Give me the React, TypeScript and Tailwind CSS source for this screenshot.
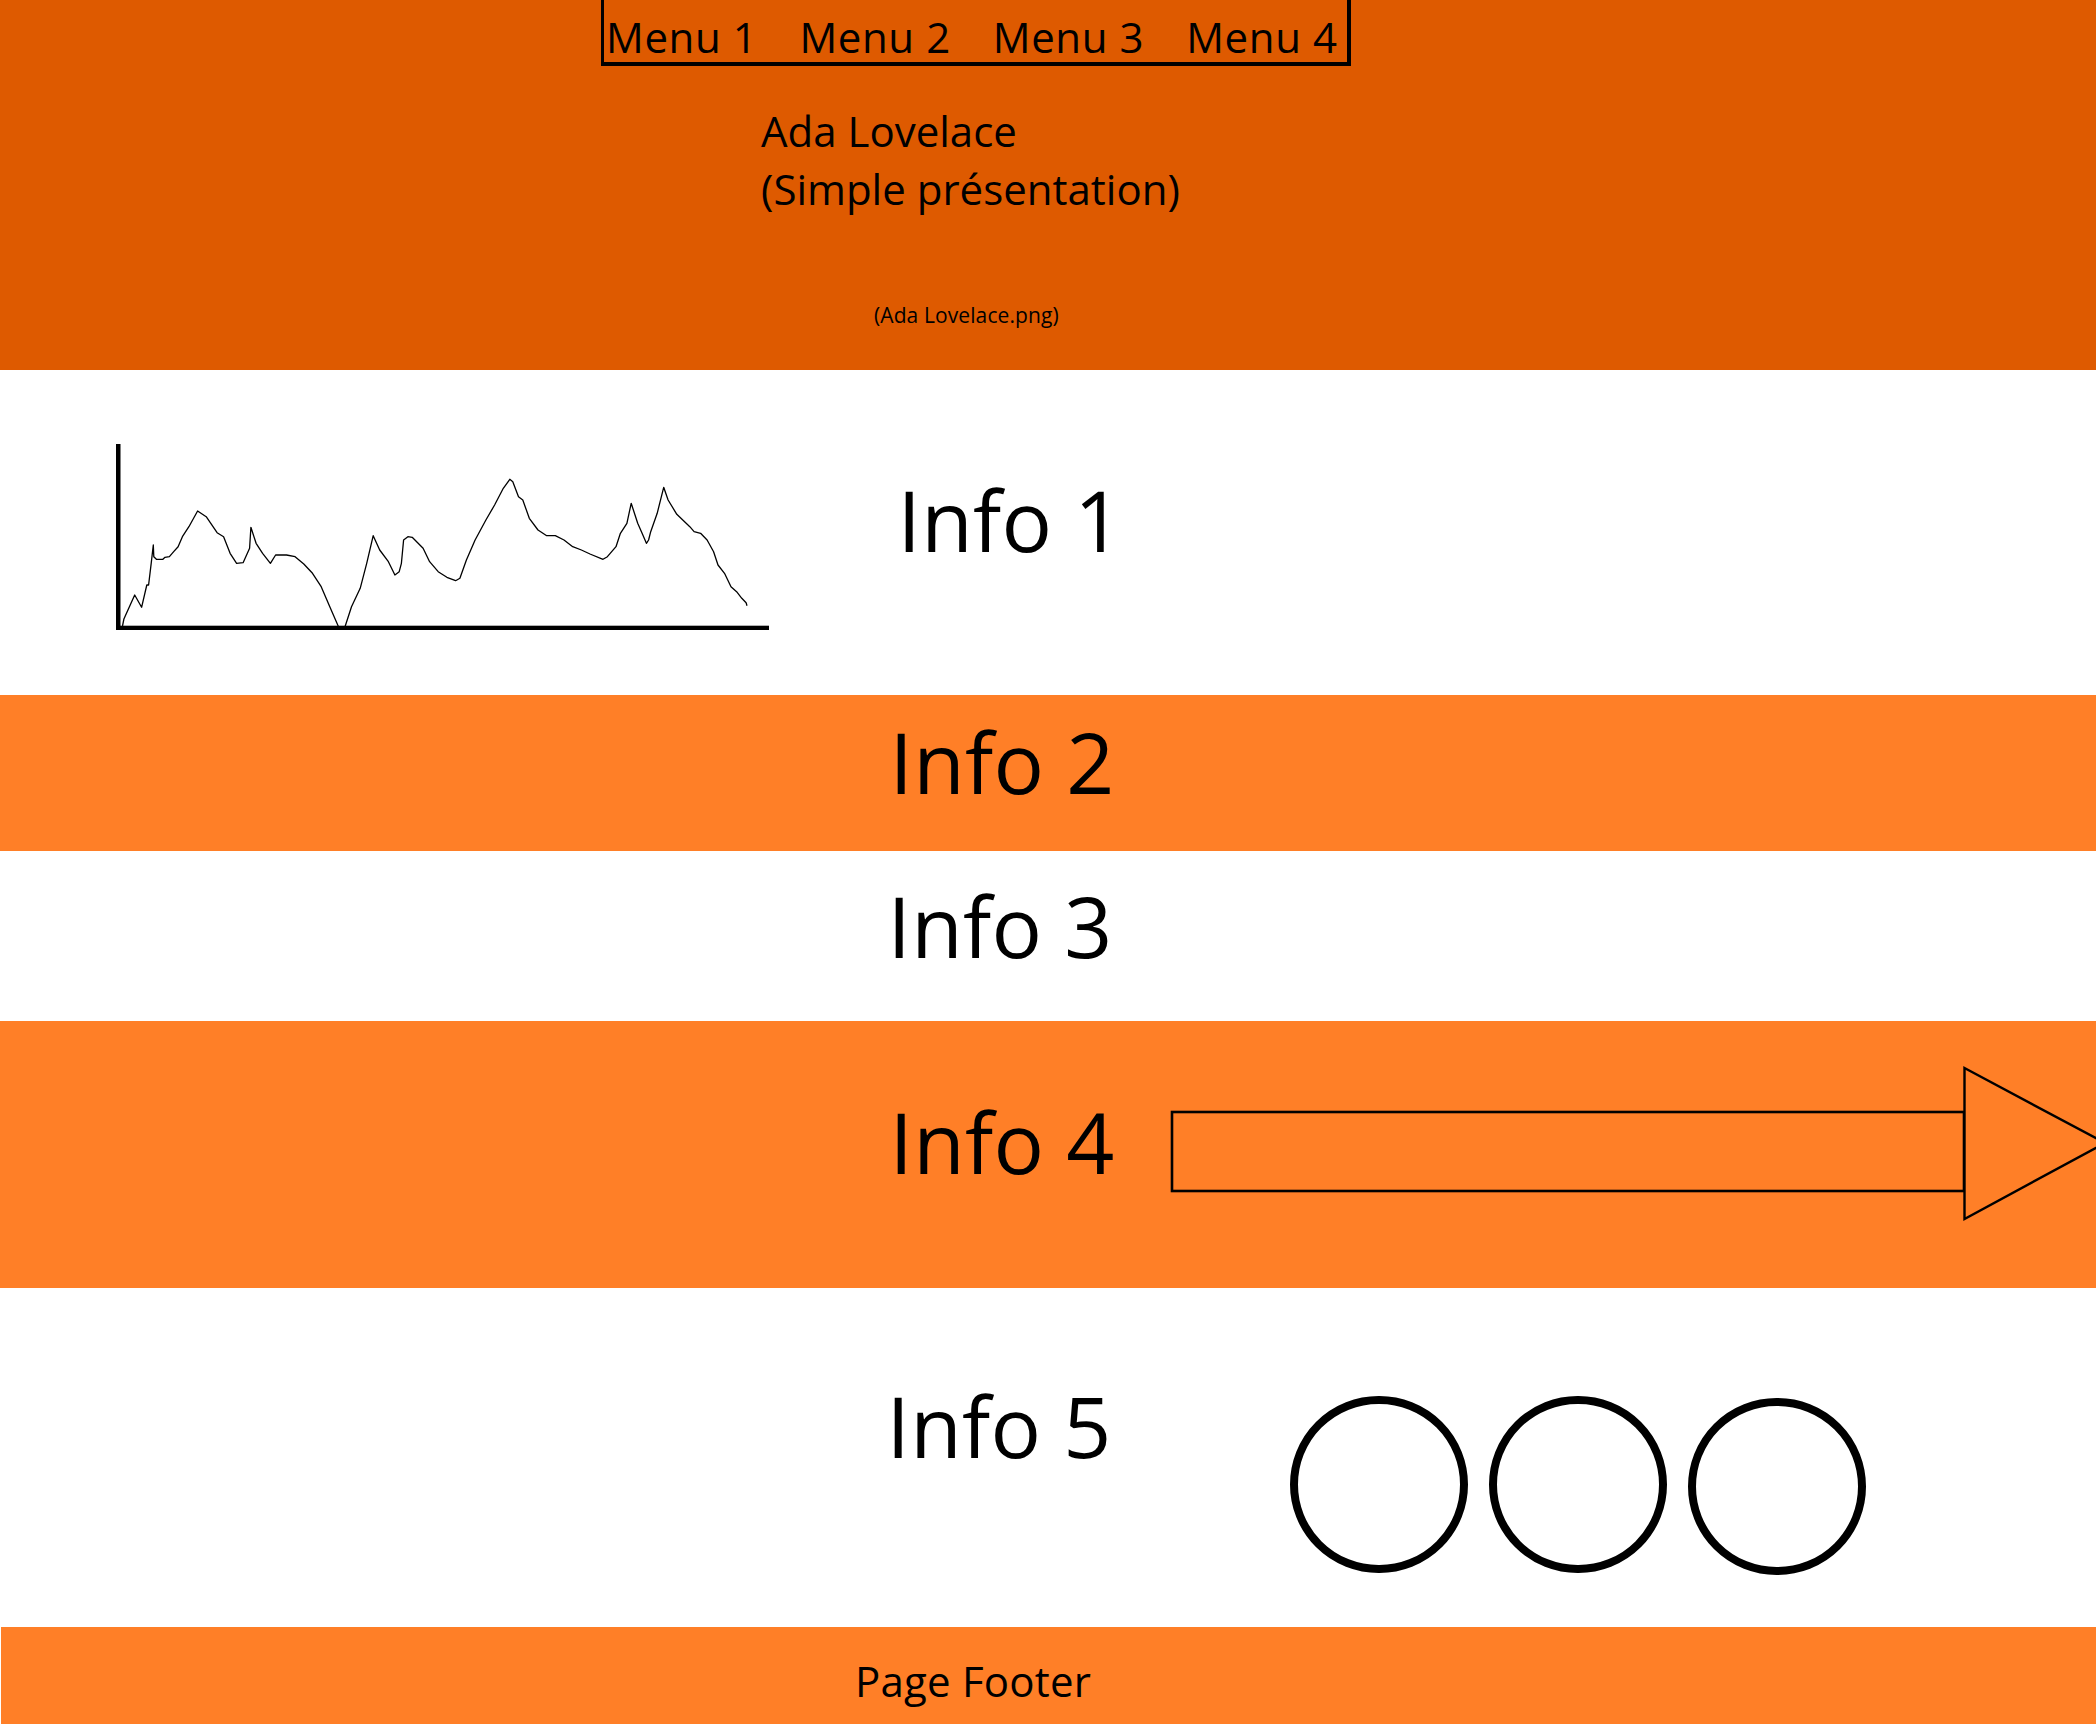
import React from "react";

const RAW: [number, number][] = [
  [52, 618], [55, 597], [80, 525], [96, 562], [108, 495], [112, 495], [118, 430], [123, 375], [124, 410], [130, 418],
  [145, 418], [150, 412], [160, 410], [170, 395], [180, 380], [190, 350], [205, 320], [225, 273], [245, 290], [270, 338],
  [285, 350], [300, 400], [315, 430], [330, 428], [345, 385], [348, 322], [360, 370], [375, 400], [393, 430], [405, 405],
  [430, 405], [450, 410], [470, 432], [490, 460], [510, 500], [530, 560], [550, 620], [565, 620], [580, 560], [600, 505],
  [615, 430], [630, 347], [645, 390], [665, 425], [680, 465], [690, 455], [695, 430], [700, 360], [710, 350], [720, 352],
  [745, 385], [760, 425], [780, 455], [800, 472], [820, 482], [830, 475], [845, 420], [865, 360], [890, 300], [910, 255],
  [930, 205], [945, 178], [952, 185], [965, 230], [975, 240], [990, 295], [1010, 330], [1030, 347], [1050, 347], [1070, 360],
  [1090, 380], [1110, 390], [1130, 402], [1160, 418], [1170, 410], [1190, 380], [1200, 340], [1215, 310], [1225, 250], [1240, 310],
  [1250, 340], [1260, 370], [1265, 360], [1270, 335], [1285, 280], [1300, 202], [1310, 240], [1330, 283], [1360, 320], [1370, 335],
  [1385, 340], [1400, 360], [1415, 395], [1425, 435], [1440, 460], [1455, 500], [1468, 515], [1480, 535], [1490, 548], [1492, 557],
];

const chartPoints = RAW.map(([x, y]) => `${(x / 2.306).toFixed(1)},${(y / 3).toFixed(1)}`).join(" ");

function Chart() {
  return (
    <svg width="680" height="230" viewBox="0 0 680 230" className="block">
      <polyline points={chartPoints} fill="none" stroke="#000" strokeWidth="1.3" strokeLinejoin="round" />
      <rect x="16" y="24" width="4.5" height="186" fill="#000" />
      <rect x="16" y="205.7" width="653" height="4.3" fill="#000" />
    </svg>
  );
}

function Arrow() {
  return (
    <svg width="926" height="156" viewBox="0 0 926 156" className="block">
      <rect x="2" y="46" width="792" height="79" fill="none" stroke="#000" strokeWidth="2.6" />
      <polygon points="794.5,2 935,77 794.5,153" fill="#FF7F27" stroke="#000" strokeWidth="2.4" />
    </svg>
  );
}

function InfoText({ children }: { children: React.ReactNode }) {
  return (
    <div className="w-[240px] text-center text-[84px] leading-none tracking-[0.2px] text-black whitespace-nowrap">
      {children}
    </div>
  );
}

export default function App() {
  return (
    <div className="w-[2096px] bg-white text-black" style={{ fontFamily: '"Open Sans", "Noto Sans", sans-serif' }}>
      {/* Header */}
      <header className="h-[370px] bg-[#DE5A00] flex flex-col">
        <nav className="ml-[601px] w-[750px] h-[66px] border-l-[3px] border-r-[4px] border-b-[4px] border-black flex gap-[42px] pt-[16px] pl-[2px]">
          {["Menu 1", "Menu 2", "Menu 3", "Menu 4"].map((m) => (
            <span key={m} className="text-[42px] leading-none tracking-[0.6px] whitespace-nowrap">
              {m}
            </span>
          ))}
        </nav>
        <div className="ml-[761px] mt-[36px] text-[42px] leading-[58px]">
          <div>Ada Lovelace</div>
          <div>(Simple présentation)</div>
        </div>
        <div className="ml-[874px] mt-[87px] text-[21px] leading-none tracking-[0.1px]">(Ada Lovelace.png)</div>
      </header>

      {/* Section 1 */}
      <section className="h-[325px] flex items-start bg-white">
        <div className="w-[890px] pl-[100px] pt-[50px]">
          <Chart />
        </div>
        <div className="pt-[108px]">
          <InfoText>Info 1</InfoText>
        </div>
      </section>

      {/* Section 2 */}
      <section className="h-[156px] flex items-start bg-[#FF7F27]">
        <div className="w-[882px]" />
        <div className="pt-[25px]">
          <InfoText>Info 2</InfoText>
        </div>
      </section>

      {/* Section 3 */}
      <section className="h-[170px] flex items-start bg-white">
        <div className="w-[880px]" />
        <div className="pt-[33px]">
          <InfoText>Info 3</InfoText>
        </div>
      </section>

      {/* Section 4 */}
      <section className="h-[267px] flex items-start bg-[#FF7F27]">
        <div className="w-[882px]" />
        <div className="pt-[79px]">
          <InfoText>Info 4</InfoText>
        </div>
        <div className="ml-[48px] mt-[45px]">
          <Arrow />
        </div>
      </section>

      {/* Section 5 */}
      <section className="h-[339px] flex items-start bg-white">
        <div className="w-[879px]" />
        <div className="pt-[96px]">
          <InfoText>Info 5</InfoText>
        </div>
        <div className="ml-[171px] mt-[108px] flex gap-[21px]">
          <div className="w-[178px] h-[177px] rounded-full border-[8px] border-black" />
          <div className="w-[178px] h-[177px] rounded-full border-[8px] border-black" />
          <div className="w-[178px] h-[177px] rounded-full border-[8px] border-black mt-[2px]" />
        </div>
      </section>

      {/* Footer */}
      <footer className="h-[97px] ml-px bg-[#FF7F27] pl-[854px] pt-[33px]">
        <span className="text-[42px] leading-none tracking-[0.2px] whitespace-nowrap">Page Footer</span>
      </footer>
    </div>
  );
}
